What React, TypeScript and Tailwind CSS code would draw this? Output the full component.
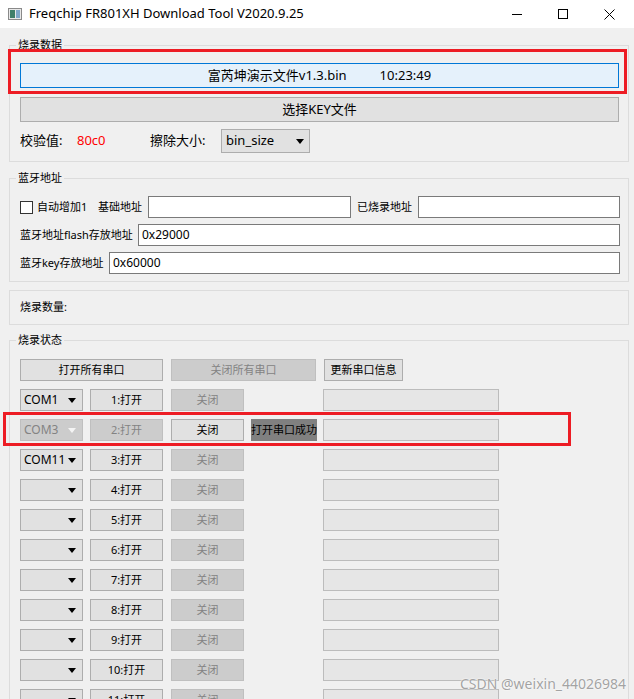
import type { ReactNode } from 'react';

const Arrow = ({ disabled = false }: { disabled?: boolean }) => (
  <svg width="8" height="5" viewBox="0 0 8 5" className="shrink-0">
    <path d="M0 0 L8 0 L4 5 Z" fill={disabled ? '#f4f4f4' : '#000'} />
  </svg>
);

const Combo = ({ text = '', disabled = false, w = 'w-[63px]' }: { text?: string; disabled?: boolean; w?: string }) => (
  <div
    className={`${w} h-[22px] flex items-center justify-between pl-[3px] pr-[6px] border text-[12px] ${
      disabled ? 'bg-[#cccccc] border-[#bfbfbf] text-[#838383]' : 'bg-[#e1e1e1] border-[#adadad] text-black'
    }`}
  >
    <span>{text}</span>
    <Arrow disabled={disabled} />
  </div>
);

const Btn = ({ children, disabled = false, w }: { children: ReactNode; disabled?: boolean; w: string }) => (
  <div
    className={`${w} h-[22px] flex items-center justify-center border text-[11px] ${
      disabled ? 'bg-[#cccccc] border-[#bfbfbf] text-[#838383]' : 'bg-[#e1e1e1] border-[#adadad] text-black'
    }`}
  >
    {children}
  </div>
);

const Field = ({ value = '', w }: { value?: string; w: string }) => (
  <div className={`${w} h-[22px] flex items-center px-[3px] bg-white border border-[#7a7a7a] text-[12px]`}>{value}</div>
);

const Group = ({ title, children, className = '' }: { title: string; children: ReactNode; className?: string }) => (
  <fieldset className={`w-[620px] border border-[#dcdcdc] ${className}`}>
    <legend className="ml-[6px] px-[2px] text-[11px] leading-[16px]">{title}</legend>
    {children}
  </fieldset>
);

const ports: { com: string; label: string; state?: 'busy' }[] = [
  { com: 'COM1', label: '1:打开' },
  { com: 'COM3', label: '2:打开', state: 'busy' },
  { com: 'COM11', label: '3:打开' },
  ...Array.from({ length: 8 }, (_, i) => ({ com: '', label: `${i + 4}:打开` })),
];

export default function App() {
  return (
    <div className="relative w-[634px] h-[699px] overflow-hidden bg-[#f0f0f0] text-black font-['Noto_Sans','Noto_Sans_CJK_SC',sans-serif]">
      {/* Title bar */}
      <div className="h-[28px] bg-white flex items-center">
        <div className="ml-[8px] w-[14px] h-[12px] border border-[#8a8a8a] bg-[#e8e8e8] flex p-[1px] gap-[1px]">
          <div className="w-[5px] bg-[#3f7f6a]" />
          <div className="flex-1 bg-[#7fa7c9]" />
        </div>
        <span className="ml-[7px] text-[13px]">Freqchip FR801XH Download Tool V2020.9.25</span>
        <div className="ml-auto flex items-center h-full">
          <div className="w-[46px] h-full flex items-center justify-center">
            <div className="w-[10px] h-px bg-black" />
          </div>
          <div className="w-[46px] h-full flex items-center justify-center">
            <div className="w-[10px] h-[10px] border border-black" />
          </div>
          <div className="w-[46px] h-full flex items-center justify-center mr-[2px]">
            <svg width="11" height="11" viewBox="0 0 11 11">
              <path d="M0.5 0.5 L10.5 10.5 M10.5 0.5 L0.5 10.5" stroke="#000" strokeWidth="1" />
            </svg>
          </div>
        </div>
      </div>

      <div className="pl-[9px]">
        {/* 烧录数据 */}
        <Group title="烧录数据" className="mt-[9px]">
          <div className="pt-[10px] pb-[8px] pl-[10px] pr-[9px] text-[13px]">
            <div className="h-[25px] flex items-center justify-center gap-[33px] bg-[#e5f1fb] border border-[#0078d7]">
              <span>富芮坤演示文件v1.3.bin</span>
              <span>10:23:49</span>
            </div>
            <div className="mt-[9px] h-[25px] flex items-center justify-center bg-[#e1e1e1] border border-[#adadad]">
              选择KEY文件
            </div>
            <div className="mt-[7px] h-[24px] flex items-center">
              <span className="w-[57px]">校验值:</span>
              <span className="w-[73px] text-[#ff0000]">80c0</span>
              <span className="w-[71px]">擦除大小:</span>
              <div className="w-[89px] h-[24px] flex items-center justify-between pl-[4px] pr-[5px] bg-[#e1e1e1] border border-[#adadad]">
                <span>bin_size</span>
                <Arrow />
              </div>
            </div>
          </div>
        </Group>

        {/* 蓝牙地址 */}
        <Group title="蓝牙地址" className="mt-[8px]">
          <div className="pt-[10px] pb-[7px] pl-[10px] pr-[8px] text-[11px] flex flex-col gap-[6px]">
            <div className="h-[22px] flex items-center">
              <div className="w-[78px] flex items-center">
                <div className="w-[13px] h-[13px] bg-white border border-[#333333]" />
                <span className="ml-[4px]">自动增加1</span>
              </div>
              <span className="w-[50px]">基础地址</span>
              <Field w="w-[203px]" />
              <span className="w-[67px] pl-[6px]">已烧录地址</span>
              <Field w="flex-1" />
            </div>
            <div className="h-[22px] flex items-center">
              <span className="w-[118px]">蓝牙地址flash存放地址</span>
              <Field w="flex-1" value="0x29000" />
            </div>
            <div className="h-[22px] flex items-center">
              <span className="w-[89px]">蓝牙key存放地址</span>
              <Field w="flex-1" value="0x60000" />
            </div>
          </div>
        </Group>

        {/* 烧录数量 */}
        <div className="mt-[8px] w-[620px] h-[35px] border border-[#dcdcdc] flex items-center pl-[10px] text-[11px]">
          烧录数量:
        </div>

        {/* 烧录状态 */}
        <Group title="烧录状态" className="mt-[7px]">
          <div className="pt-[11px] pl-[10px] flex flex-col gap-[8px]">
            <div className="flex items-center">
              <Btn w="w-[143px]">打开所有串口</Btn>
              <div className="ml-[8px]">
                <Btn w="w-[145px]" disabled>
                  关闭所有串口
                </Btn>
              </div>
              <div className="ml-[8px]">
                <Btn w="w-[79px]">更新串口信息</Btn>
              </div>
            </div>
            {ports.map((p) => {
              const busy = p.state === 'busy';
              return (
                <div key={p.label} className="flex items-center">
                  <Combo text={p.com} disabled={busy} />
                  <div className="ml-[7px]">
                    <Btn w="w-[73px]" disabled={busy}>
                      {p.label}
                    </Btn>
                  </div>
                  <div className="ml-[8px]">
                    <Btn w="w-[73px]" disabled={!busy}>
                      关闭
                    </Btn>
                  </div>
                  <div
                    className={`ml-[7px] w-[66px] h-[22px] flex items-center justify-center text-[11px] ${
                      busy ? 'bg-[#808080]' : ''
                    }`}
                  >
                    {busy ? '打开串口成功' : ''}
                  </div>
                  <div className="ml-[6px] w-[176px] h-[22px] bg-[#e6e6e6] border border-[#bcbcbc]" />
                </div>
              );
            })}
          </div>
        </Group>
      </div>

      {/* Red annotation boxes */}
      <div className="absolute left-[8px] top-[49px] w-[619px] h-[45px] border-[3px] border-[#ed1c24]" />
      <div className="absolute left-[3px] top-[412px] w-[568px] h-[34px] border-[3px] border-[#ed1c24]" />

      {/* Watermark */}
      <div className="absolute left-[460px] top-[673px] text-[14px] text-[#a3a3a3] [text-shadow:0_0_2px_#fff,0_0_1px_#fff]">
        CSDN @weixin_44026984
      </div>
    </div>
  );
}
